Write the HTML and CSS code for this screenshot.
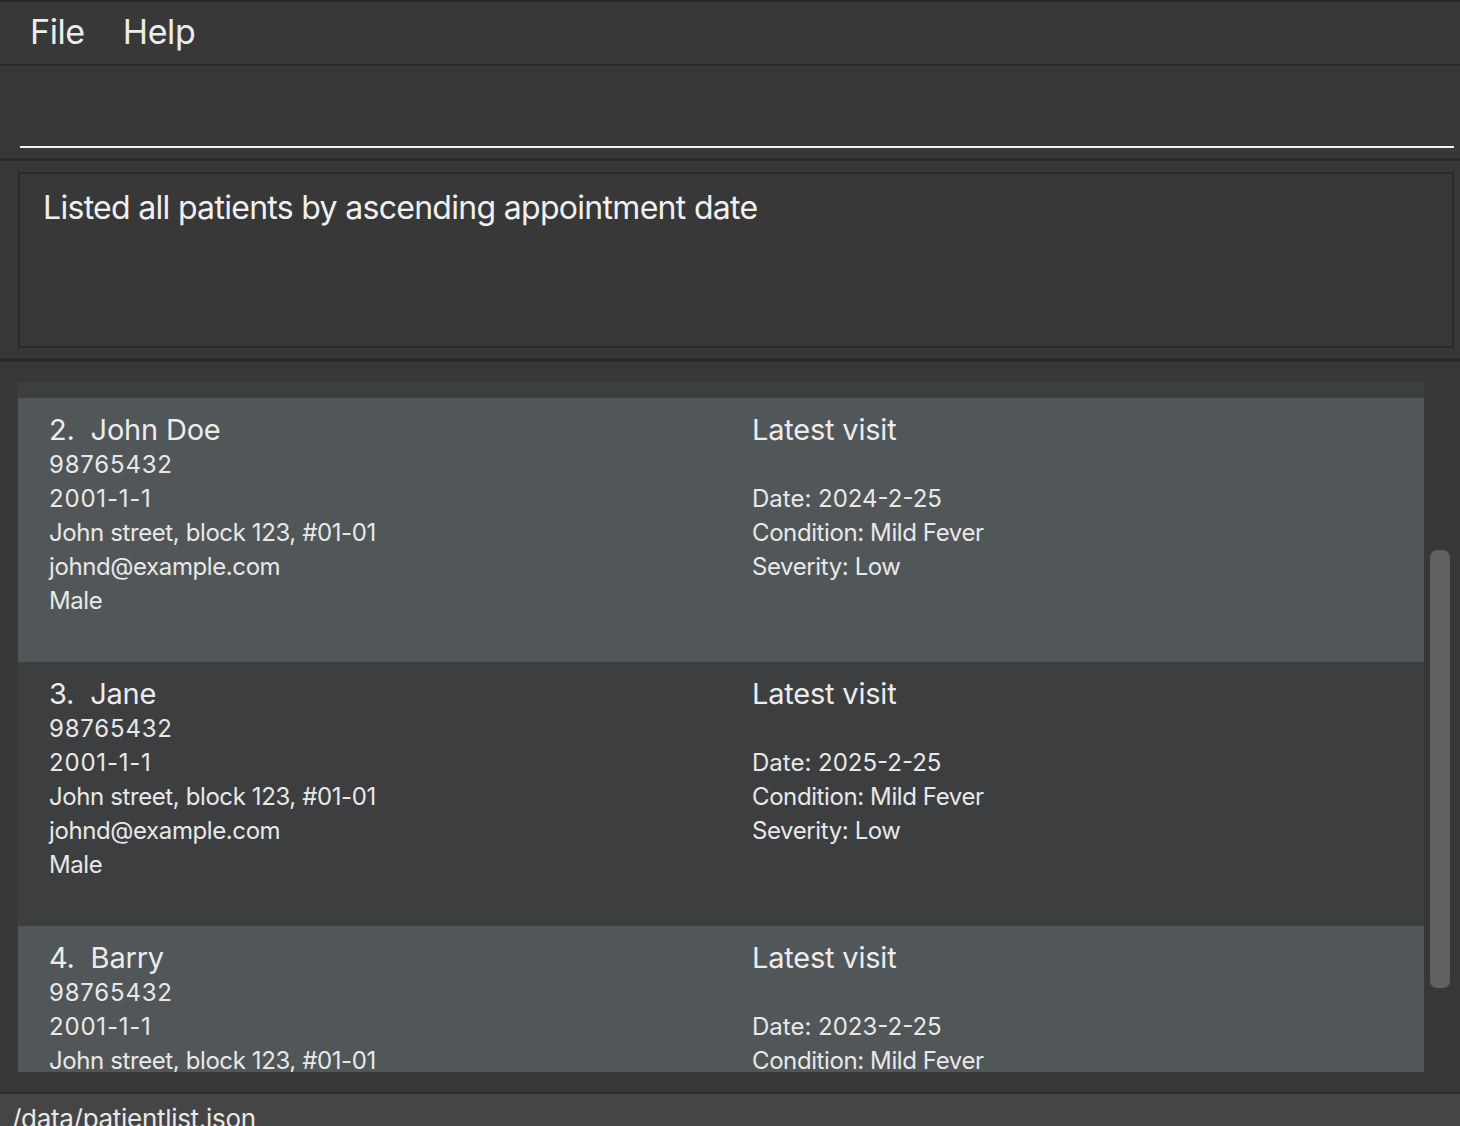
FILE: index.html
```html
<!DOCTYPE html>
<html>
<head>
<meta charset="utf-8">
<link rel="stylesheet" href="styles.css">
</head>
<body>
<div class="app">
  <div class="menubar">
    <span class="menu-item">File</span>
    <span class="menu-item">Help</span>
  </div>
  <div class="command">
    <div class="command-input"></div>
  </div>
  <div class="result-pane">
    <div class="result-box">Listed all patients by ascending appointment date</div>
  </div>
  <div class="list-pane">
    <div class="list">
      <div class="list-inner">
        <div class="card odd stub"></div>
        <div class="card even">
          <div class="col">
            <div class="name">2.&nbsp; John Doe</div>
            <div class="line num">98765432</div>
            <div class="line num">2001-1-1</div>
            <div class="line">John street, block 123, #01-01</div>
            <div class="line">johnd@example.com</div>
            <div class="line">Male</div>
          </div>
          <div class="col">
            <div class="name">Latest visit</div>
            <div class="line">&nbsp;</div>
            <div class="line date">Date: 2024-2-25</div>
            <div class="line">Condition: Mild Fever</div>
            <div class="line">Severity: Low</div>
          </div>
        </div>
        <div class="card odd">
          <div class="col">
            <div class="name">3.&nbsp; Jane</div>
            <div class="line num">98765432</div>
            <div class="line num">2001-1-1</div>
            <div class="line">John street, block 123, #01-01</div>
            <div class="line">johnd@example.com</div>
            <div class="line">Male</div>
          </div>
          <div class="col">
            <div class="name">Latest visit</div>
            <div class="line">&nbsp;</div>
            <div class="line date">Date: 2025-2-25</div>
            <div class="line">Condition: Mild Fever</div>
            <div class="line">Severity: Low</div>
          </div>
        </div>
        <div class="card even">
          <div class="col">
            <div class="name">4.&nbsp; Barry</div>
            <div class="line num">98765432</div>
            <div class="line num">2001-1-1</div>
            <div class="line">John street, block 123, #01-01</div>
            <div class="line">johnd@example.com</div>
            <div class="line">Male</div>
          </div>
          <div class="col">
            <div class="name">Latest visit</div>
            <div class="line">&nbsp;</div>
            <div class="line date">Date: 2023-2-25</div>
            <div class="line">Condition: Mild Fever</div>
            <div class="line">Severity: Low</div>
          </div>
        </div>
      </div>
    </div>
    <div class="scrollbar">
      <div class="thumb"></div>
    </div>
  </div>
  <div class="statusbar">/data/patientlist.json</div>
</div>
</body>
</html>
```
FILE: styles.css
```css
html, body {
  margin: 0;
  padding: 0;
  background: #383838;
}
.app {
  width: 1460px;
  height: 1126px;
  overflow: hidden;
  display: flex;
  flex-direction: column;
  font-family: "Inter", "Open Sans", sans-serif;
  color: #e8e8e8;
  border-top: 2px solid #262626;
  box-sizing: border-box;
}
.menubar {
  height: 64px;
  flex: none;
  box-sizing: border-box;
  display: flex;
  align-items: center;
  gap: 38px;
  padding: 0 0 3px 30px;
  background: #383838;
  border-bottom: 2px solid #2b2b2b;
  font-size: 34px;
  letter-spacing: -0.4px;
  color: #ececec;
}
.command {
  height: 92px;
  flex: none;
  background: #383838;
  padding: 0 6px 0 20px;
  display: flex;
  align-items: flex-start;
}
.command-input {
  margin-top: 80px;
  height: 2px;
  width: 100%;
  background: #f2f2f2;
}
.result-pane {
  flex: none;
  border-top: 3px solid #2b2b2b;
  border-bottom: 4px solid #2b2b2b;
  padding: 11px 6px 10px 18px;
  background: #383838;
}
.result-box {
  border: 2px solid #2b2b2b;
  box-sizing: border-box;
  height: 176px;
  padding: 14px 23px;
  font-size: 32px;
  line-height: 40px;
  letter-spacing: -0.7px;
  color: #f0f0f0;
}
.list-pane {
  flex: 1;
  min-height: 0;
  display: flex;
  padding: 20px 10px 20px 18px;
  gap: 6px;
  background: #383838;
}
.list {
  flex: 1;
  overflow: hidden;
  height: 690px;
}
.list-inner {
  display: flex;
  flex-direction: column;
}
.card {
  display: grid;
  grid-template-columns: 1fr 1fr;
  height: 264px;
  flex: none;
  box-sizing: border-box;
  padding-top: 13px;
}
.card.stub {
  height: 16px;
  padding: 0;
}
.even { background: #515658; }
.odd { background: #3c3e40; }
.col {
  padding-left: 31px;
}
.name {
  font-size: 29px;
  line-height: 37px;
  letter-spacing: -0.2px;
  color: #ececec;
}
.line {
  font-size: 24px;
  line-height: 34px;
  letter-spacing: -0.4px;
  color: #e8e8e8;
}
.line.num {
  letter-spacing: 0.8px;
}
.line.date {
  letter-spacing: 0;
}
.scrollbar {
  width: 20px;
  flex: none;
  padding-top: 168px;
}
.thumb {
  height: 438px;
  border-radius: 7px;
  background: #606060;
}
.statusbar {
  flex: none;
  height: 34px;
  box-sizing: border-box;
  border-top: 2px solid #2b2b2b;
  background: #454545;
  padding: 6px 0 0 12px;
  font-size: 26px;
  line-height: 38px;
  letter-spacing: -0.3px;
  color: #e8e8e8;
  overflow: hidden;
}
```
